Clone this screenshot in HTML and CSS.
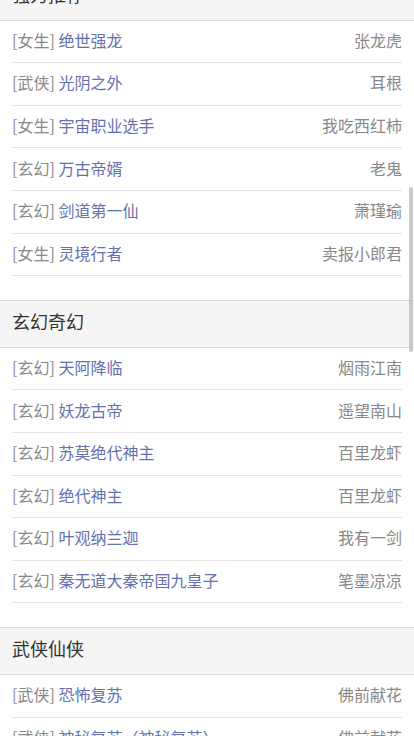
FILE: index.html
```html
<!DOCTYPE html>
<html lang="zh-CN">
  <head>
    <meta charset="UTF-8" />
    <meta name="viewport" content="width=device-width, initial-scale=1.0" />
    <title>书库</title>
    <link rel="stylesheet" href="styles.css">
  </head>
  <body>
    <div class="page">
      <section class="block">
        <h2 class="block-title">强力推荐</h2>
        <ul class="book-list">
          <li><span class="book"><em>[女生]</em> <a href="#">绝世强龙</a></span><span class="author">张龙虎</span></li>
          <li><span class="book"><em>[武侠]</em> <a href="#">光阴之外</a></span><span class="author">耳根</span></li>
          <li><span class="book"><em>[女生]</em> <a href="#">宇宙职业选手</a></span><span class="author">我吃西红柿</span></li>
          <li><span class="book"><em>[玄幻]</em> <a href="#">万古帝婿</a></span><span class="author">老鬼</span></li>
          <li><span class="book"><em>[玄幻]</em> <a href="#">剑道第一仙</a></span><span class="author">萧瑾瑜</span></li>
          <li><span class="book"><em>[女生]</em> <a href="#">灵境行者</a></span><span class="author">卖报小郎君</span></li>
        </ul>
      </section>

      <section class="block">
        <h2 class="block-title">玄幻奇幻</h2>
        <ul class="book-list">
          <li><span class="book"><em>[玄幻]</em> <a href="#">天阿降临</a></span><span class="author">烟雨江南</span></li>
          <li><span class="book"><em>[玄幻]</em> <a href="#">妖龙古帝</a></span><span class="author">遥望南山</span></li>
          <li><span class="book"><em>[玄幻]</em> <a href="#">苏莫绝代神主</a></span><span class="author">百里龙虾</span></li>
          <li><span class="book"><em>[玄幻]</em> <a href="#">绝代神主</a></span><span class="author">百里龙虾</span></li>
          <li><span class="book"><em>[玄幻]</em> <a href="#">叶观纳兰迦</a></span><span class="author">我有一剑</span></li>
          <li><span class="book"><em>[玄幻]</em> <a href="#">秦无道大秦帝国九皇子</a></span><span class="author">笔墨凉凉</span></li>
        </ul>
      </section>

      <section class="block">
        <h2 class="block-title">武侠仙侠</h2>
        <ul class="book-list">
          <li><span class="book"><em>[武侠]</em> <a href="#">恐怖复苏</a></span><span class="author">佛前献花</span></li>
          <li><span class="book"><em>[武侠]</em> <a href="#">神秘复苏（神秘复苏）</a></span><span class="author">佛前献花</span></li>
          <li><span class="book"><em>[武侠]</em> <a href="#">仙逆</a></span><span class="author">耳根</span></li>
        </ul>
      </section>
    </div>
    <div class="scroll-thumb"></div>
  </body>
</html>
```

FILE: styles.css
```css
* {
  box-sizing: border-box;
}

html,
body {
  margin: 0;
  padding: 0;
  overflow: hidden;
}

body {
  font-family: "Noto Sans CJK SC", "Liberation Sans", sans-serif;
  background-color: #fff;
  color: #333;
}

/* 页面是滚动过的，第一个标题只露出一部分 */
.page {
  margin-top: -27px;
}

.block {
  margin-bottom: 24px;
}

.block-title {
  margin: 0;
  height: 47.6px;
  padding: 0 12px 4px;
  font-size: 18px;
  font-weight: normal;
  line-height: 41.6px;
  color: #333;
  background-color: #f5f5f5;
  border-top: 1px solid #dcdcdc;
  border-bottom: 1px solid #dcdcdc;
}

.book-list {
  margin: 0;
  padding: 0 12px;
  list-style: none;
}

.book-list li {
  display: flex;
  justify-content: space-between;
  align-items: center;
  height: 42.6px;
  padding-bottom: 3px;
  font-size: 16px;
  border-bottom: 1px solid #e3e3e3;
}

.book em {
  font-style: normal;
  color: #888;
}

.book a {
  color: #6670ad;
  text-decoration: none;
}

.author {
  color: #888;
}

/* 手机上的悬浮滚动条 */
.scroll-thumb {
  position: fixed;
  top: 187px;
  right: 1px;
  width: 4px;
  height: 165px;
  border-radius: 2px;
  background-color: #c9c9c9;
}
```
